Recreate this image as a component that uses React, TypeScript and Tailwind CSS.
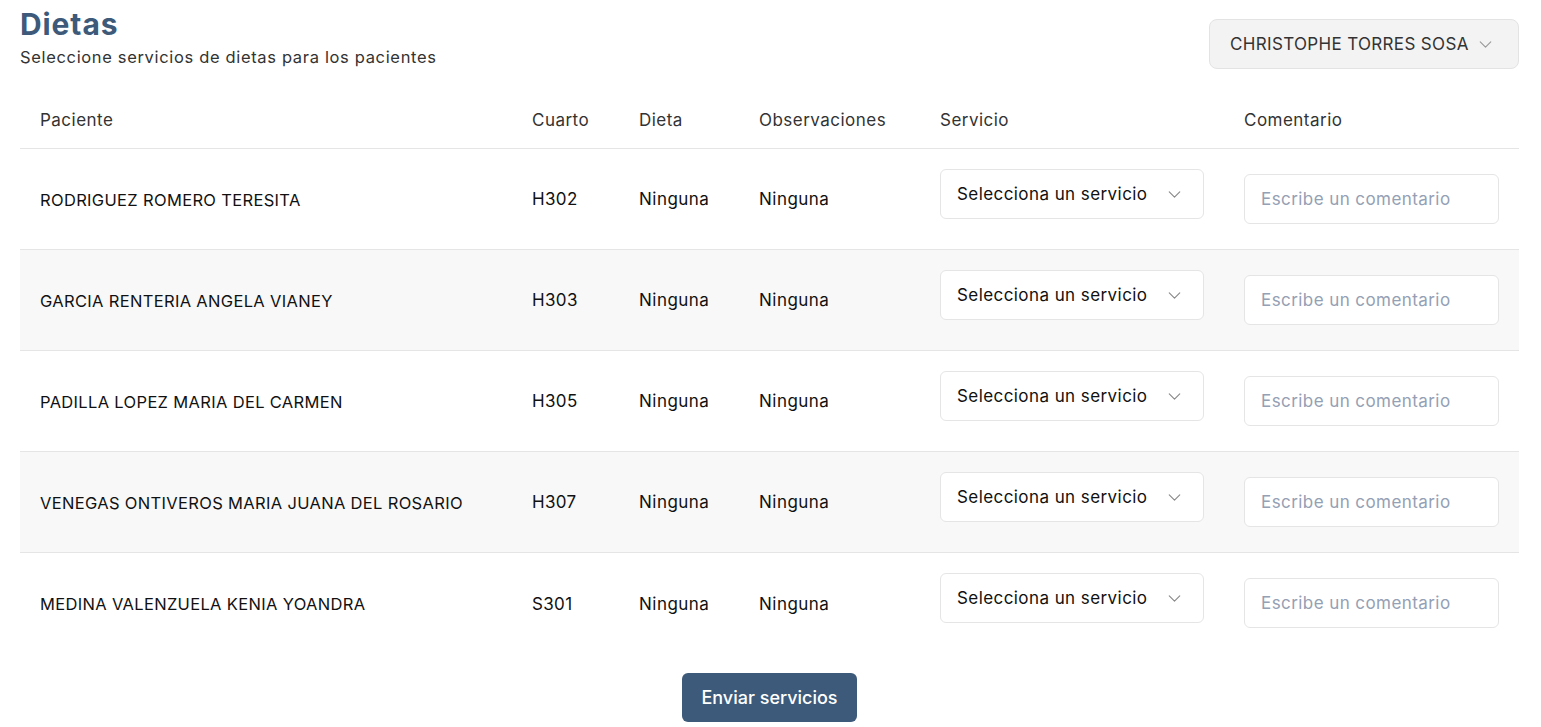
import { ChevronDown } from "lucide-react";

const PATIENTS = [
  { name: "RODRIGUEZ ROMERO TERESITA", room: "H302" },
  { name: "GARCIA RENTERIA ANGELA VIANEY", room: "H303" },
  { name: "PADILLA LOPEZ MARIA DEL CARMEN", room: "H305" },
  { name: "VENEGAS ONTIVEROS MARIA JUANA DEL ROSARIO", room: "H307" },
  { name: "MEDINA VALENZUELA KENIA YOANDRA", room: "S301" },
];

function ServiceSelect() {
  return (
    <div className="pb-[10px]">
      <button className="flex h-[50px] w-[264px] items-center justify-between rounded-md border border-[#e5e5e5] bg-white pl-4 pr-[18px] pt-[2px] text-[17px] tracking-[0.025em] text-[#111]">
        <span>Selecciona un servicio</span>
        <ChevronDown size={21} strokeWidth={1.3} className="text-[#888]" />
      </button>
    </div>
  );
}

export default function App() {
  return (
    <div
      className="min-h-screen bg-white pl-5 pr-[22px] tracking-[0.03em] text-[#111]"
      style={{ fontFamily: "Inter, 'Noto Sans', sans-serif" }}
    >
      {/* Header */}
      <div className="flex items-end justify-between pt-[5px]">
        <div>
          <h1 className="mt-px text-[30px] font-bold leading-9 tracking-[0.03em] text-[#3d5a7a]">Dietas</h1>
          <p className="mt-[3px] text-[16.5px] leading-6 tracking-[0.04em] text-[#333]">
            Seleccione servicios de dietas para los pacientes
          </p>
        </div>
        <button className="flex h-[50px] w-[310px] items-center justify-between rounded-lg border border-[#e3e3e3] bg-[#f3f3f3] pl-5 pr-[22px] pt-px text-[17px] tracking-[0.02em] text-[#333]">
          <span>CHRISTOPHE TORRES SOSA</span>
          <ChevronDown size={21} strokeWidth={1.3} className="text-[#999]" />
        </button>
      </div>

      {/* Table */}
      <table className="mt-[19px] w-full table-fixed border-collapse">
        <colgroup>
          <col className="w-[492px]" />
          <col className="w-[107px]" />
          <col className="w-[120px]" />
          <col className="w-[181px]" />
          <col className="w-[304px]" />
          <col />
        </colgroup>
        <thead>
          <tr className="h-[60px] border-b border-[#e5e5e5] text-left text-[17px] text-[#333]">
            <th className="px-5 pt-[5px] font-normal">Paciente</th>
            <th className="px-5 pt-[5px] font-normal">Cuarto</th>
            <th className="px-5 pt-[5px] font-normal">Dieta</th>
            <th className="px-5 pt-[5px] font-normal">Observaciones</th>
            <th className="px-5 pt-[5px] font-normal">Servicio</th>
            <th className="px-5 pt-[5px] font-normal">Comentario</th>
          </tr>
        </thead>
        <tbody>
          {PATIENTS.map((p, i) => (
            <tr
              key={p.room}
              className={`h-[101px] text-[17px] ${i % 2 === 1 ? "bg-[#f8f8f8]" : "bg-white"} ${
                i < PATIENTS.length - 1 ? "border-b border-[#e5e5e5]" : ""
              }`}
            >
              <td className="px-5 pt-[3px] text-[16.5px] tracking-[0.02em]">{p.name}</td>
              <td className="px-5 pt-[3px] tracking-[0.02em]">{p.room}</td>
              <td className="px-5 pt-[3px]">Ninguna</td>
              <td className="px-5 pt-[3px]">Ninguna</td>
              <td className="px-5">
                <ServiceSelect />
              </td>
              <td className="px-5">
                <input
                  placeholder="Escribe un comentario"
                  className="h-[50px] w-[255px] rounded-md border border-[#e5e5e5] bg-white px-4 pt-px text-[17px] tracking-[0.025em] text-[#111] outline-none placeholder:text-[#94a0b4]"
                />
              </td>
            </tr>
          ))}
        </tbody>
      </table>

      <div className="mt-5 flex justify-center">
        <button className="h-[49px] w-[175px] rounded-md bg-[#3d5a7a] text-[18px] font-medium tracking-normal text-white">
          Enviar servicios
        </button>
      </div>
    </div>
  );
}
